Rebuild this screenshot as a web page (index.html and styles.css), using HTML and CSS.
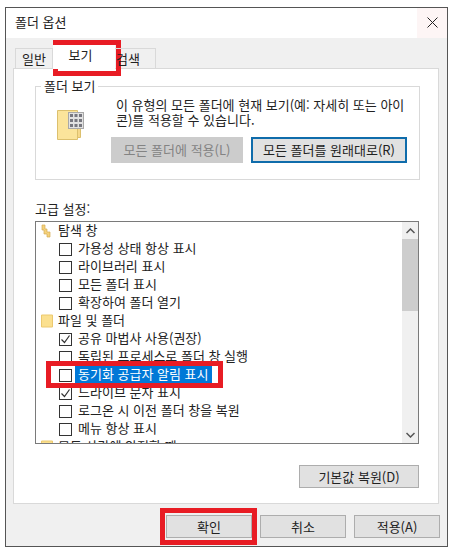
FILE: index.html
```html
<!DOCTYPE html>
<html lang="ko">
<head>
    <meta charset="UTF-8">
    <meta name="viewport" content="width=device-width, initial-scale=1.0">
    <title>폴더 옵션</title>
    <link rel="stylesheet" href="styles.css">
</head>
<body>
    <div class="window">
        <!-- Title bar -->
        <div class="titlebar">
            <span>폴더 옵션</span>
            <div class="close">
                <svg width="11" height="11" viewBox="0 0 11 11"><path d="M0.5 0.5L10.5 10.5M10.5 0.5L0.5 10.5" stroke="#222" fill="none"/></svg>
            </div>
        </div>

        <div class="content">
            <!-- Tabs -->
            <div class="tabs">
                <div class="tab tab-general">일반</div>
                <div class="tab tab-active">보기</div>
                <div class="tab tab-search">검색</div>
            </div>

            <div class="panel">
                <!-- Folder view group -->
                <div class="group">
                    <div class="legend">폴더 보기</div>
                    <svg class="group-icon" width="28" height="32" viewBox="0 0 28 32">
                        <path d="M0.5 1.5H20.5V30.5H0.5Z" fill="#fbe49b" stroke="#dcc06e"/>
                        <path d="M20.5 5.5H23.5V28.5H20.5Z" fill="#f6d88a" stroke="#dcc06e"/>
                        <rect x="11.5" y="3.5" width="15" height="16" fill="#e2e2e2" stroke="#a8a8a8"/>
                        <path d="M13 5h3v3h-3zM17.5 5h3v3h-3zM22 5h3v3h-3zM13 10h3v3h-3zM17.5 10h3v3h-3zM22 10h3v3h-3zM13 15h3v3h-3zM17.5 15h3v3h-3zM22 15h3v3h-3z" fill="#77777f"/>
                    </svg>
                    <div class="group-main">
                        <p class="group-text">이 유형의 모든 폴더에 현재 보기(예: 자세히 또는 아이콘)를 적용할 수 있습니다.</p>
                        <div class="group-buttons">
                            <div class="btn btn-disabled">모든 폴더에 적용(L)</div>
                            <div class="btn btn-focus">모든 폴더를 원래대로(R)</div>
                        </div>
                    </div>
                </div>

                <!-- Advanced settings -->
                <div class="advanced-label">고급 설정:</div>
                <div class="list">
                    <div class="rows">
                        <div class="row row-head">
                            <svg class="row-icon" width="12" height="14" viewBox="0 0 12 14"><path d="M1 1h3v4h2v3h3v5H6V10H3V6H1z" fill="#f5d27c" stroke="#d5ac55" stroke-width="0.7"/></svg>
                            탐색 창
                        </div>
                        <div class="row"><span class="check"></span>가용성 상태 항상 표시</div>
                        <div class="row"><span class="check"></span>라이브러리 표시</div>
                        <div class="row"><span class="check"></span>모든 폴더 표시</div>
                        <div class="row"><span class="check"></span>확장하여 폴더 열기</div>
                        <div class="row row-head">
                            <svg class="row-icon" width="12" height="14" viewBox="0 0 12 14"><path d="M0.5 1h11v12h-11z" fill="#fbe08f" stroke="#ecc96f"/></svg>
                            파일 및 폴더
                        </div>
                        <div class="row"><span class="check"><svg width="11" height="11" viewBox="0 0 11 11"><path d="M1.5 5.500L4.500 8.500L9.500 1.500" fill="none" stroke="#333" stroke-width="1.200"/></svg></span>공유 마법사 사용(권장)</div>
                        <div class="row"><span class="check"></span>독립된 프로세스로 폴더 창 실행</div>
                        <div class="row"><span class="check"></span><span class="selected">동기화 공급자 알림 표시</span></div>
                        <div class="row"><span class="check"><svg width="11" height="11" viewBox="0 0 11 11"><path d="M1.5 5.500L4.500 8.500L9.500 1.500" fill="none" stroke="#333" stroke-width="1.200"/></svg></span>드라이브 문자 표시</div>
                        <div class="row"><span class="check"></span>로그온 시 이전 폴더 창을 복원</div>
                        <div class="row"><span class="check"></span>메뉴 항상 표시</div>
                        <div class="row row-head">
                            <svg class="row-icon" width="12" height="14" viewBox="0 0 12 14"><path d="M0.5 1h11v12h-11z" fill="#fbe08f" stroke="#ecc96f"/></svg>
                            모든 사람에 안전할 때
                        </div>
                    </div>
                    <div class="scrollbar">
                        <div class="scroll-arrow">
                            <svg width="9" height="6" viewBox="0 0 9 6"><path d="M0.5 5L4.500 1L8.500 5" fill="none" stroke="#555" stroke-width="1.500"/></svg>
                        </div>
                        <div class="scroll-thumb"></div>
                        <div class="scroll-track"></div>
                        <div class="scroll-arrow">
                            <svg width="9" height="6" viewBox="0 0 9 6"><path d="M0.5 1L4.500 5L8.500 1" fill="none" stroke="#555" stroke-width="1.500"/></svg>
                        </div>
                    </div>
                </div>
                <div class="restore-row">
                    <div class="btn btn-restore">기본값 복원(D)</div>
                </div>
            </div>

            <!-- Dialog buttons -->
            <div class="footer">
                <div class="btn btn-dialog">확인</div>
                <div class="btn btn-dialog">취소</div>
                <div class="btn btn-dialog">적용(A)</div>
            </div>
        </div>

        <!-- Red marks drawn on top of the screenshot -->
        <div class="mark mark-tab"></div>
        <div class="mark mark-row"></div>
        <div class="mark mark-ok"></div>
    </div>
</body>
</html>
```

FILE: styles.css
```css
* {
    margin: 0;
    padding: 0;
    box-sizing: border-box;
}

body {
    font-family: "Noto Sans CJK KR", "Noto Sans", sans-serif;
    font-size: 13px;
    line-height: 16px;
    background: #fff;
    color: #222;
    padding: 7px 0 0 5px;
}

.window {
    position: relative;
    width: 443px;
    height: 540px;
    border: 1px solid #555;
    display: flex;
    flex-direction: column;
    overflow: hidden;
}

.titlebar {
    height: 30px;
    background: #fff;
    display: flex;
    align-items: flex-start;
    justify-content: space-between;
    padding: 6px 0 0 9px;
    flex-shrink: 0;
}

.close {
    width: 30px;
    height: 30px;
    margin-top: -6px;
    padding-bottom: 2px;
    background: #fdf5f5;
    display: flex;
    align-items: center;
    justify-content: center;
}

.content {
    flex: 1;
    background: #f0f0f0;
    padding: 10px 8px 0 7px;
    display: flex;
    flex-direction: column;
}

.tabs {
    display: flex;
    height: 20px;
    padding-left: 2px;
    position: relative;
    z-index: 1;
}

.tab {
    border: 1px solid #d9d9d9;
    border-bottom: none;
    height: 20px;
    text-align: center;
    line-height: 19px;
}

.tab-general {
    width: 38px;
}

.tab-active {
    width: 62px;
    height: 24px;
    margin-top: -3px;
    padding-right: 7px;
    background: #fff;
    border-color: #fff;
    line-height: 18px;
}

.tab-search {
    width: 41px;
    border-left: none;
    padding-right: 14px;
    white-space: nowrap;
}

.panel {
    width: 426px;
    height: 436px;
    background: #fff;
    border: 1px solid #d9d9d9;
    padding: 17px 18px 0 21px;
}

.group {
    position: relative;
    height: 94px;
    border: 1px solid #d9d9d9;
    display: flex;
    padding: 10px 0 0 21px;
}

.legend {
    position: absolute;
    top: -9px;
    left: 5px;
    background: #fff;
    padding: 0 3px;
}

.group-icon {
    flex-shrink: 0;
    margin-top: 12px;
}

.group-main {
    margin-left: 31px;
    width: 300px;
}

.group-text {
    line-height: 15px;
}

.group-buttons {
    display: flex;
    gap: 8px;
    margin-top: 10px;
    margin-left: -5px;
}

.btn {
    background: #e1e1e1;
    border: 1px solid #adadad;
    display: flex;
    align-items: center;
    justify-content: center;
}

.btn-disabled {
    width: 132px;
    height: 26px;
    background: #ccc;
    border-color: #ccc;
    color: #838383;
}

.btn-focus {
    width: 156px;
    height: 26px;
    border: 2px solid #0f6cab;
}

.advanced-label {
    margin-top: 21px;
    height: 20px;
}

.list {
    width: 384px;
    height: 223px;
    border: 1px solid #7a7a7a;
    display: flex;
    overflow: hidden;
}

.rows {
    flex: 1;
    margin-top: -1px;
    padding-left: 5px;
}

.row {
    height: 18px;
    display: flex;
    align-items: center;
    padding-left: 18px;
    white-space: nowrap;
}

.row-head {
    padding-left: 0;
    gap: 5px;
}

.row-icon {
    flex-shrink: 0;
    margin-top: 2px;
}

.check {
    width: 13px;
    height: 13px;
    border: 1px solid #333;
    background: #fff;
    margin: 2px 6px 0 0;
    display: flex;
    align-items: center;
    justify-content: center;
    flex-shrink: 0;
}

.selected {
    background: #0078d7;
    color: #fff;
    margin: 1px 0 0 -3px;
    padding: 0 3px 1px;
}

.scrollbar {
    width: 16px;
    background: #f0f0f0;
    display: flex;
    flex-direction: column;
    flex-shrink: 0;
}

.scroll-arrow {
    height: 17px;
    display: flex;
    align-items: center;
    justify-content: center;
    flex-shrink: 0;
}

.scroll-thumb {
    height: 72px;
    background: #cdcdcd;
    flex-shrink: 0;
}

.scroll-track {
    flex: 1;
}

.restore-row {
    display: flex;
    justify-content: flex-end;
    margin-top: 21px;
    padding-right: 1px;
}

.btn-restore {
    width: 120px;
    height: 23px;
}

.footer {
    display: flex;
    justify-content: flex-end;
    gap: 8px;
    margin-top: 11px;
    margin-right: -1px;
}

.btn-dialog {
    width: 86px;
    height: 23px;
}

.mark {
    position: absolute;
    border: 5px solid #e81c24;
}

.mark-tab {
    left: 47px;
    top: 32px;
    width: 68px;
    height: 36px;
}

.mark-row {
    left: 40px;
    top: 353px;
    width: 177px;
    height: 27px;
}

.mark-ok {
    left: 154px;
    top: 500px;
    width: 97px;
    height: 37px;
}
```
